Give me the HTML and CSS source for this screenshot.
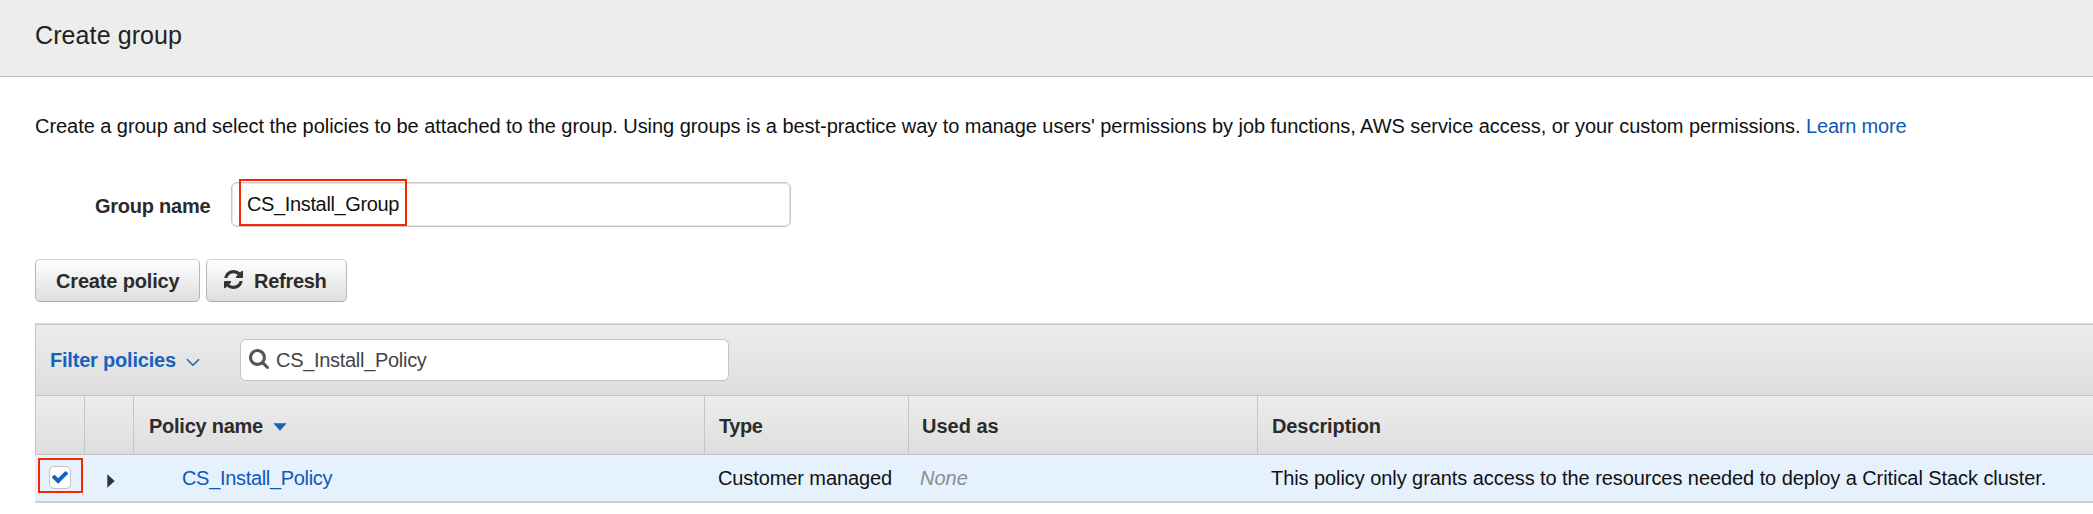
FILE: index.html
```html
<!DOCTYPE html>
<html lang="en">
<head>
<meta charset="utf-8">
<title>Create group</title>
<link rel="stylesheet" href="styles.css">
</head>
<body>
<header class="page-header"><h1 class="page-title">Create group</h1></header>
<main class="content">
  <p class="intro">Create a group and select the policies to be attached to the group. Using groups is a best-practice way to manage users' permissions by job functions, AWS service access, or your custom permissions. <a class="link learn" href="#">Learn more</a></p>

  <div class="form-row">
    <label class="form-label">Group name</label>
    <div class="text-input"><span class="input-value">CS_Install_Group</span><span class="marker marker-name"></span></div>
  </div>

  <div class="buttons">
    <button class="btn btn-create">Create policy</button>
    <button class="btn btn-refresh">
      <svg class="refresh-icon" viewBox="128 128 1536 1536"><path d="M1639 1056q0 5-1 7-64 268-268 434.5t-478 166.5q-146 0-282.5-55t-243.5-157l-129 129q-19 19-45 19t-45-19-19-45v-448q0-26 19-45t45-19h448q26 0 45 19t19 45-19 45l-137 137q71 66 161 102t187 36q134 0 250-65t186-179q11-17 53-117 8-23 30-23h192q13 0 22.5 9.5t9.5 22.5zm25-800v448q0 26-19 45t-45 19h-448q-26 0-45-19t-19-45 19-45l138-138q-148-137-349-137-134 0-250 65t-186 179q-11 17-53 117-8 23-30 23h-199q-13 0-22.5-9.5t-9.5-22.5v-7q65-268 270-434.5t480-166.5q146 0 284 55.5t245 156.5l130-129q19-19 45-19t45 19 19 45z"/></svg>
      <span>Refresh</span>
    </button>
  </div>

  <section class="policies">
    <div class="toolbar">
      <a class="filter" href="#"><span>Filter policies</span>
        <svg class="chevron" viewBox="0 0 14 9"><path d="M1 1.2 7 7.2 13 1.2"/></svg></a>
      <div class="search">
        <svg class="search-icon" viewBox="64 128 1664 1664"><path d="M1216 832q0-185-131.5-316.5t-316.5-131.5-316.5 131.5-131.5 316.5 131.5 316.5 316.5 131.5 316.5-131.5 131.5-316.5zm512 832q0 52-38 90t-90 38q-54 0-90-38l-343-342q-179 124-399 124-143 0-273.5-55.5t-225-150-150-225-55.5-273.5 55.5-273.5 150-225 225-150 273.5-55.5 273.5 55.5 225 150 150 225 55.5 273.5q0 220-124 399l343 343q37 37 37 90z"/></svg>
        <span class="search-value">CS_Install_Policy</span>
      </div>
    </div>
    <div class="grid-row head">
      <div class="th"></div>
      <div class="th"></div>
      <div class="th"><span class="th-name">Policy name</span><svg class="sort" viewBox="0 0 14 8"><path d="M.3.3h13.4L7 7.8z"/></svg></div>
      <div class="th th-type">Type</div>
      <div class="th">Used as</div>
      <div class="th">Description</div>
    </div>
    <div class="grid-row item">
      <div class="td td-check">
        <span class="checkbox"><svg class="check" viewBox="121 372 1550 1150"><path d="M1671 566q0 40-28 68l-724 724-136 136q-28 28-68 28t-68-28l-136-136-362-362q-28-28-28-68t28-68l136-136q28-28 68-28t68 28l294 295 656-657q28-28 68-28t68 28l136 136q28 28 28 68z"/></svg></span>
        <span class="marker marker-check"></span>
      </div>
      <div class="td td-arrow"><svg class="arrow" viewBox="0 0 8 14"><path d="M.3.3 7.7 7 .3 13.7z"/></svg></div>
      <div class="td td-name"><a class="link" href="#">CS_Install_Policy</a></div>
      <div class="td td-managed">Customer managed</div>
      <div class="td none">None</div>
      <div class="td td-desc">This policy only grants access to the resources needed to deploy a Critical Stack cluster.</div>
    </div>
  </section>
</main>
</body>
</html>
```

FILE: styles.css
```css
* { box-sizing: border-box; }
body {
  margin: 0;
  overflow: hidden;
  background: #fff;
  color: #111;
  font: 20px/24px "Liberation Sans", Arial, sans-serif;
}
svg { display: block; flex: none; }
a { text-decoration: none; }

.page-header {
  height: 77px;
  padding: 21px 35px 0;
  background: #ededed;
  border-bottom: 1px solid #c0c0c0;
}
.page-title {
  margin: 0;
  color: #222;
  font-size: 25px;
  font-weight: normal;
  line-height: 28px;
  letter-spacing: 0.1px;
}

.content { padding: 37px 0 0 35px; }
.intro {
  margin: 0 0 44px;
  white-space: nowrap;
  letter-spacing: -0.048px;
}
.link { color: #0f58b7; }
.learn { letter-spacing: -0.2px; }

.form-row { display: flex; align-items: center; height: 45px; }
.form-label {
  width: 196px;
  padding: 3px 0 0 60px;
  color: #2b2b2b;
  font-weight: bold;
  letter-spacing: -0.25px;
}
.text-input {
  position: relative;
  width: 560px;
  height: 45px;
  padding: 9px 0 0 15px;
  border: 1px solid #c6c6c6;
  border-radius: 6px;
  box-shadow: inset 0 0 0 1px #e6e6e6;
}
.input-value { letter-spacing: -0.36px; }

/* Red highlight frames laid over the controls */
.marker { position: absolute; border: 2px solid #fb2400; }
.marker-name { left: 7px; top: -4px; width: 168px; height: 47px; }
.marker-check { left: 3px; top: 3px; width: 45px; height: 35px; }

.buttons { display: flex; gap: 6px; margin-top: 32px; }
.btn {
  display: flex;
  align-items: center;
  height: 43px;
  padding: 0;
  border: 1px solid #b8b8b8;
  border-top-color: #d0d0d0;
  border-bottom-color: #a9a9a9;
  border-radius: 5px;
  background: linear-gradient(#fff, #dedede);
  color: #2b2b2b;
  font: bold 20px/24px "Liberation Sans", Arial, sans-serif;
}
.btn-create { width: 165px; padding: 0 0 0 20px; letter-spacing: -0.16px; }
.btn-refresh { width: 141px; padding: 0 0 0 17px; gap: 11px; letter-spacing: -0.28px; }
.refresh-icon { width: 19px; height: 19px; margin-top: -2px; fill: #333; }

.policies { margin-top: 21px; }
.toolbar {
  display: flex;
  height: 73px;
  border: 1px solid #c4c4c4;
  border-top-color: #dadada;
  border-right: 0;
  box-shadow: inset 0 1px #c6c6c6;
  background: linear-gradient(#ececec, #dedede);
}
.filter {
  display: flex;
  width: 204px;
  padding: 24px 0 0 14px;
  color: #1663bd;
  font-weight: bold;
  letter-spacing: -0.2px;
}
.chevron {
  width: 14px;
  height: 9px;
  margin: 10px 0 0 10px;
  fill: none;
  stroke: #1663bd;
  stroke-width: 1.6;
}
.search {
  display: flex;
  width: 489px;
  height: 42px;
  margin-top: 15px;
  padding: 8px 0 0 8px;
  border: 1px solid #c4c4c4;
  border-radius: 6px;
  background: #fff;
  color: #444;
}
.search-icon { width: 20px; height: 20px; margin-top: 1px; fill: #555; }
.search-value { margin-left: 7px; letter-spacing: -0.3px; }

.grid-row { display: grid; grid-template-columns: 50px 49px 571px 204px 349px 1fr; }
.head {
  height: 59px;
  border-bottom: 1px solid #c4c4c4;
  background: linear-gradient(#ededed, #dedede);
  color: #2b2b2b;
  font-weight: bold;
}
.th { display: flex; padding: 18px 0 0 13px; border-right: 1px solid #c6c6c6; }
.th:first-child { border-left: 1px solid #c6c6c6; }
.th:last-child { padding-left: 14px; border-right: 0; letter-spacing: -0.1px; }
.th:nth-child(3) { padding-left: 15px; }
.th-name { letter-spacing: -0.25px; }
.th.th-type { letter-spacing: -0.4px; padding-left: 14px; }
.sort { width: 14px; height: 8px; margin: 9px 0 0 10px; fill: #1663bd; }

.item {
  height: 48px;
  border-bottom: 2px solid #cfcfcf;
  background: #e5f1fd;
}
.td { padding: 11px 0 0 13px; white-space: nowrap; }
.td-managed { letter-spacing: -0.1px; }
.td-check { position: relative; padding: 11px 0 0 14px; }
.checkbox {
  display: flex;
  align-items: center;
  justify-content: center;
  width: 22px;
  height: 23px;
  border: 1px solid #c3c3c3;
  border-radius: 5px;
  background: #fff;
}
.check { width: 16px; height: 13px; fill: #1663bd; }
.td-arrow { padding: 19px 0 0 22px; }
.arrow { width: 8px; height: 14px; fill: #333; }
.td-name { padding-left: 48px; letter-spacing: -0.32px; }
.none { color: #8d8d8d; font-style: italic; padding-left: 11px; }
.td-desc { letter-spacing: -0.07px; }
```
